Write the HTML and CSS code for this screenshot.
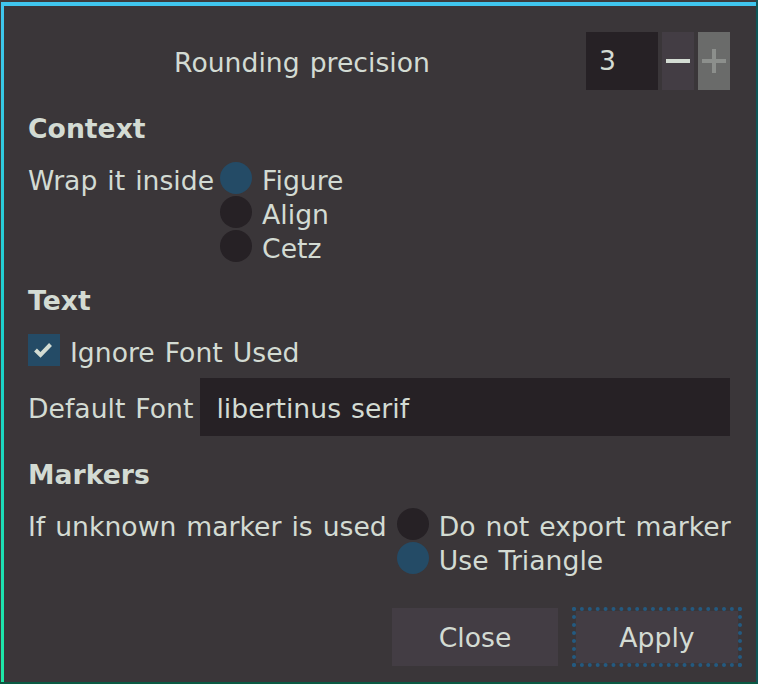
FILE: index.html
```html
<!DOCTYPE html>
<html lang="en">
<head>
    <meta charset="UTF-8">
    <title>Export Settings</title>
    <link rel="stylesheet" href="styles.css">
</head>
<body>
    <div class="frame">
        <div class="window">
            <div class="precision">
                <span class="precision-label">Rounding precision</span>
                <div class="spin">
                    <span class="spin-value">3</span>
                    <button class="spin-btn">
                        <svg width="24" height="24" viewBox="0 0 24 24"><rect x="0" y="10" width="24" height="4" fill="#d3dcd3"/></svg>
                    </button>
                    <button class="spin-btn disabled">
                        <svg width="24" height="24" viewBox="0 0 24 24"><rect x="0" y="10" width="24" height="4" fill="#8c8f8c"/><rect x="10" y="0" width="4" height="24" fill="#8c8f8c"/></svg>
                    </button>
                </div>
            </div>

            <h2 class="heading first">Context</h2>
            <div class="option-row">
                <span class="option-label">Wrap it inside</span>
                <div class="radios">
                    <div class="radio"><span class="dot on"></span><span class="radio-text">Figure</span></div>
                    <div class="radio"><span class="dot"></span><span class="radio-text">Align</span></div>
                    <div class="radio"><span class="dot"></span><span class="radio-text">Cetz</span></div>
                </div>
            </div>

            <h2 class="heading">Text</h2>
            <div class="check-row">
                <span class="checkbox">
                    <svg width="32" height="32" viewBox="0 0 32 32"><polyline points="7.5,16 12.5,21 22.5,10.5" fill="none" stroke="#d3dcd3" stroke-width="4"/></svg>
                </span>
                <span class="radio-text">Ignore Font Used</span>
            </div>
            <div class="font-row">
                <span class="font-label">Default Font</span>
                <div class="text-input">libertinus serif</div>
            </div>

            <h2 class="heading markers">Markers</h2>
            <div class="option-row">
                <span class="option-label marker-label">If unknown marker is used</span>
                <div class="radios">
                    <div class="radio"><span class="dot"></span><span class="radio-text">Do not export marker</span></div>
                    <div class="radio"><span class="dot on"></span><span class="radio-text">Use Triangle</span></div>
                </div>
            </div>

            <div class="buttons">
                <button class="btn">Close</button>
                <button class="btn focused">Apply</button>
            </div>
        </div>
    </div>
</body>
</html>
```

FILE: styles.css
```css
* {
    box-sizing: border-box;
    margin: 0;
    padding: 0;
}

body {
    width: 758px;
    height: 684px;
    overflow: hidden;
    background-color: #3d3c3d;
    font-family: 'DejaVu Sans', sans-serif;
    font-size: 26.67px;
    word-spacing: 1.5px;
    white-space: nowrap;
    color: #d3dbd3;
}

.frame {
    height: 684px;
    padding-top: 2px;
    border-right: 2px solid #0f5658;
    border-bottom: 2px solid #0b5a43;
    display: flex;
}

.window {
    flex: 1;
    min-width: 0;
    margin-left: 1px;
    border-top: 4px solid #40c6ee;
    background: linear-gradient(to bottom, #40c6ee, #1bd2cc 50%, #1ee8a6) 0 0 / 3px 100% no-repeat, #3a3639;
    padding: 26px 26px 0 27px;
    display: flex;
    flex-direction: column;
    align-items: flex-start;
}

/* top spin row */
.precision {
    display: flex;
    align-items: center;
    width: 100%;
    height: 58px;
}

.precision-label {
    flex: 1;
    text-align: center;
    margin-right: 10px;
    padding-top: 2px;
}

.spin {
    display: flex;
    gap: 4px;
    height: 58px;
}

.spin-value {
    width: 72px;
    background-color: #262125;
    padding-left: 13px;
    line-height: 58px;
}

.spin-btn {
    width: 32px;
    border: none;
    background-color: #433d44;
    display: flex;
    align-items: center;
    justify-content: center;
}

.spin-btn.disabled {
    background-color: #6a6b6a;
}

.heading {
    font-size: 26.67px;
    font-weight: bold;
    line-height: 34px;
    margin-top: 20px;
}

.heading.first {
    margin-top: 22px;
}

.heading.markers {
    margin-top: 22px;
}

.option-row {
    display: flex;
    margin-top: 16px;
}

.option-label {
    line-height: 34px;
    padding-top: 2px;
    margin-right: 6px;
}

.marker-label {
    margin-right: 10px;
}

.radio {
    display: flex;
    height: 34px;
}

.dot {
    flex: none;
    width: 32px;
    height: 32px;
    border-radius: 50%;
    background-color: #262125;
    margin-right: 10px;
}

.dot.on {
    background-color: #244b66;
}

.radio-text {
    line-height: 34px;
    padding-top: 2px;
}

.check-row {
    display: flex;
    height: 36px;
    margin-top: 16px;
}

.checkbox {
    width: 32px;
    height: 32px;
    background-color: #244b66;
    margin-right: 10px;
}

.font-row {
    display: flex;
    align-items: center;
    width: 100%;
    margin-top: 8px;
}

.font-label {
    margin-right: 7px;
    padding-top: 2px;
}

.text-input {
    flex: 1;
    height: 58px;
    line-height: 58px;
    background-color: #262125;
    padding-left: 16px;
    padding-top: 2px;
}

.buttons {
    display: flex;
    justify-content: flex-end;
    align-items: center;
    gap: 14px;
    width: calc(100% + 12px);
    margin-top: 31px;
}

.btn {
    width: 166px;
    height: 58px;
    border: none;
    background-color: #433d44;
    color: #d3dbd3;
    font-family: 'DejaVu Sans', sans-serif;
    font-size: 26.67px;
    word-spacing: 1.5px;
    padding-top: 1px;
}

.btn.focused {
    width: 170px;
    height: 60px;
    border: 4px dotted #245a80;
    background-clip: padding-box;
}
```
